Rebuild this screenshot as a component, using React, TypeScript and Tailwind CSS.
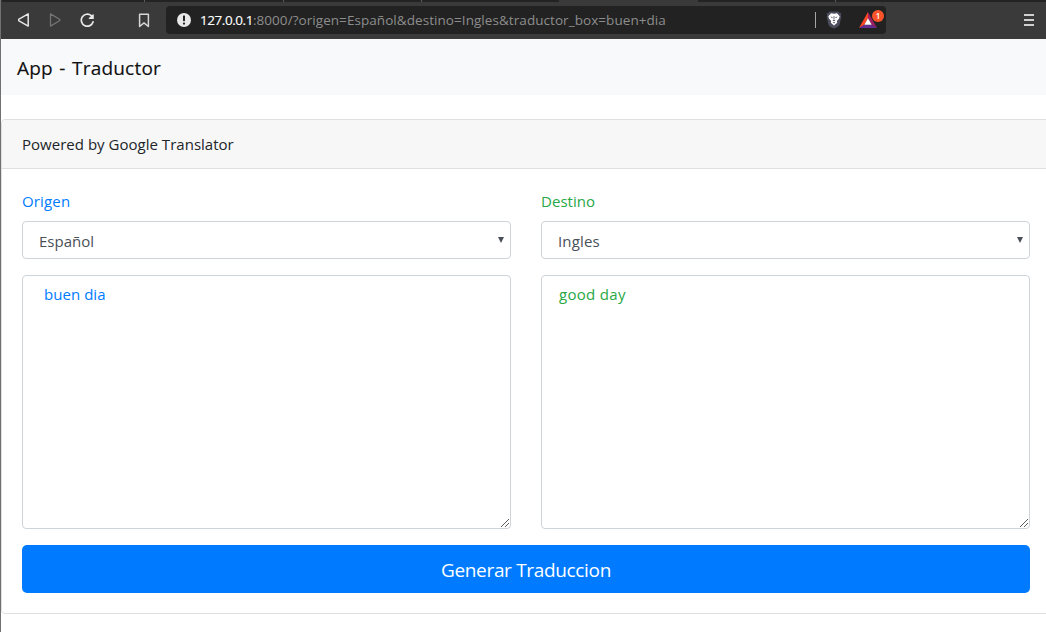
import React from "react";

function ResizeGrip() {
  return (
    <svg className="pointer-events-none absolute right-[1px] bottom-[2px]" width="9" height="9" viewBox="0 0 9 9" fill="#5a5a5a" shapeRendering="crispEdges">
      {[0, 1, 2, 3, 4, 5, 6, 7].map((i) => (
        <rect key={i} x={i} y={8 - i} width="1" height="1" />
      ))}
      {[0, 1, 2, 3].map((i) => (
        <rect key={"b" + i} x={4 + i} y={8 - i} width="1" height="1" />
      ))}
    </svg>
  );
}

function Browser() {
  return (
    <header className="flex h-[39px] flex-col bg-[#3a3a3a]">
      <div className="flex h-[2px] shrink-0 pl-px">
        <div className="w-[143px] border-r border-[#5c5c5c] bg-[#232323]" />
        <div className="w-[139px] border-r border-[#5c5c5c] bg-[#232323]" />
        <div className="w-[138px] border-r border-[#5c5c5c] bg-[#232323]" />
        <div className="w-[137px] bg-[#232323]" />
        <div className="w-[139px]" />
        <div className="w-[138px] border-r border-[#5c5c5c] bg-[#232323]" />
        <div className="flex-1 bg-[#232323]" />
      </div>
      <div className="flex h-[37px] items-center pb-[1px]">
        <svg className="ml-[17px]" width="12" height="14" viewBox="0 0 12 14" fill="none" stroke="#e6e6e6" strokeWidth="1.5" strokeLinejoin="round">
          <path d="M10.2 .9v12.2L1 7.9a1 1 0 0 1 0-1.7z" />
        </svg>
        <svg className="ml-[19px]" width="12" height="14" viewBox="0 0 12 14" fill="none" stroke="#747474" strokeWidth="1.3" strokeLinejoin="round">
          <path d="M1.5 .9v12.2L10.5 7.8a1 1 0 0 0 0-1.6z" />
        </svg>
        <svg className="ml-[19px]" width="15" height="15" viewBox="0 0 15 15" fill="none">
          <path d="M11.2 2.6A6 6 0 1 0 13.1 8.8" stroke="#e8e8e8" strokeWidth="1.7" strokeLinecap="round" />
          <path d="M13.8 1.7V6H9.2c-.5 0-.7-.6-.3-.9l4-3.8c.4-.3.9-.1.9.4z" fill="#e8e8e8" />
        </svg>
        <svg className="ml-[43px]" width="12" height="15" viewBox="0 0 12 15" fill="none" stroke="#d6d6d6" strokeWidth="1.5" strokeLinejoin="round">
          <path d="M1.6 1.2h8.8v12.3L6 9.9l-4.4 3.6z" />
        </svg>
        <div className="ml-[16px] flex h-[28px] w-[720px] items-center rounded bg-[#222222] pl-[11px]">
          <svg width="14" height="14" viewBox="0 0 14 14">
            <circle cx="7" cy="7" r="7" fill="#e8e8e8" />
            <rect x="6" y="2.5" width="2" height="5.7" rx=".6" fill="#222" />
            <circle cx="7" cy="10.6" r="1.15" fill="#222" />
          </svg>
          <div className="ml-[9px] w-[615px] font-['Open_Sans','Noto_Sans',sans-serif] text-[13.5px] leading-[20px] whitespace-nowrap text-[#8d8d8d]">
            <span className="tracking-[-0.45px] text-white [-webkit-text-stroke:0.15px_white]">127.0.0.1</span>
            <span className="tracking-[0.06px]">:8000/?origen=Español&amp;destino=Ingles&amp;traductor_box=buen+dia</span>
          </div>
          <div className="h-[16px] w-px shrink-0 bg-[#a5a5a5]" />
          <svg className="ml-[10px] shrink-0" width="16" height="18" viewBox="0 0 16 18">
            <path d="M3.6.5h8.8l1.4 1.4 1.6.3-.5 2 .4 1.7-1.7 7.5c-.4 1.5-1.7 2.4-5.6 4.1-3.9-1.7-5.2-2.6-5.6-4.1L.7 5.9l.4-1.7-.5-2 1.6-.3z" fill="#4c4d5d" />
            <path d="M5 2.2l3 .5 3-.5 2.7 3.1-.8 2.5-2 2.3.3 1.7L8 14.4l-3.2-2.6.3-1.7-2-2.3-.8-2.5z" fill="#fff" />
            <path d="M4.4 5.6l2.4.7-.7.9zM11.6 5.6l-2.4.7.7.9zM7.6 5h.8v3h-.8zM6.5 9.2L8 8.6l1.5.6L8 10.2zM6.5 11.7L8 11.1l1.5.6-1.5.5z" fill="#4c4d5d" />
          </svg>
          <div className="relative ml-[16px] h-[18px] w-[27px] shrink-0">
            <svg className="mt-[1px] ml-[1px]" width="18" height="16" viewBox="0 0 18 16">
              <path d="M9 0L0 16l5.4-3.2L9 6.3z" fill="#ff4724" />
              <path d="M9 0l9 16-5.4-3.2L9 6.3z" fill="#9e1f63" />
              <path d="M0 16h18l-5.4-3.2H5.4z" fill="#662d91" />
              <path d="M9 6.3l3.7 6.5H5.3z" fill="#fff" />
            </svg>
            <span className="absolute top-[-1px] left-[14px] flex h-[12px] w-[12px] items-center justify-center rounded-full bg-[#fb542b] font-['Open_Sans',sans-serif] text-[8px] leading-none font-semibold text-white">1</span>
          </div>
        </div>
        <div className="mr-[12px] ml-auto flex w-[10px] flex-col gap-[3px]">
          <div className="h-[2px] bg-[#cfcfcf]" />
          <div className="h-[2px] bg-[#cfcfcf]" />
          <div className="h-[2px] bg-[#cfcfcf]" />
        </div>
      </div>
    </header>
  );
}

type FieldProps = {
  label: string;
  options: string[];
  value: string;
  text: string;
  tone: string;
  area: string;
  labelSpacing: string;
  selectSpacing: string;
};

function Field({ label, options, value, text, tone, area, labelSpacing, selectSpacing }: FieldProps) {
  return (
    <div className="flex w-[489px] flex-col">
      <label className={`mb-2 h-6 leading-6 ${tone} ${labelSpacing}`}>{label}</label>
      <div className="relative mb-4 h-[38px]">
        <select defaultValue={value} className={`h-full w-full appearance-none rounded border border-[#ced4da] bg-white pt-[2px] pl-[16px] text-[#495057] ${selectSpacing}`}>
          {options.map((o) => (
            <option key={o}>{o}</option>
          ))}
        </select>
        <svg className="pointer-events-none absolute top-[16px] right-[7px]" width="6" height="6" viewBox="0 0 6 6" fill="#495057">
          <path d="M0 0h6L3 6z" />
        </svg>
      </div>
      <div className="relative h-[254px]">
        <textarea defaultValue={text} className={`block h-full w-full resize-none rounded border border-[#ced4da] py-[6px] leading-6 ${tone} ${area}`} />
        <ResizeGrip />
      </div>
    </div>
  );
}

export default function App() {
  return (
    <div className="h-[632px] w-[1046px] overflow-hidden border-l border-[#707070] bg-white font-['Open_Sans','Noto_Sans',sans-serif] text-[15px] text-[#212529]">
      <Browser />
      <nav className="flex h-[56px] items-center bg-[#f8f9fb] pt-[1px] pl-4">
        <h1 className="text-[19px] leading-[30px] font-normal tracking-[0.2px] text-[#111] [-webkit-text-stroke:0.15px_#111] [word-spacing:1.3px]">App - Traductor</h1>
      </nav>
      <main className="mt-6 w-[1050px] rounded border border-[#dfdfdf]">
        <div className="h-[49px] rounded-t border-b border-[#dfdfdf] bg-[#f7f7f7] px-5 py-3 leading-6 tracking-[0.02px]">Powered by Google Translator</div>
        <form className="flex flex-col gap-4 p-5" onSubmit={(e) => e.preventDefault()}>
          <div className="flex gap-[30px]">
            <Field label="Origen" options={["Español", "Ingles"]} value="Español" text="buen dia" tone="text-[#007bff]" area="pl-[21px] tracking-[0.05px]" labelSpacing="tracking-[0.15px]" selectSpacing="tracking-[0px]" />
            <Field label="Destino" options={["Español", "Ingles"]} value="Ingles" text="good day" tone="text-[#28a745]" area="pl-[17px] tracking-[0.3px]" labelSpacing="tracking-[0.05px]" selectSpacing="tracking-[0.15px]" />
          </div>
          <button className="h-12 w-full rounded-[5px] bg-[#007bff] pt-[2px] text-[19px] leading-[30px] tracking-[-0.33px] text-white">Generar Traduccion</button>
        </form>
      </main>
    </div>
  );
}
